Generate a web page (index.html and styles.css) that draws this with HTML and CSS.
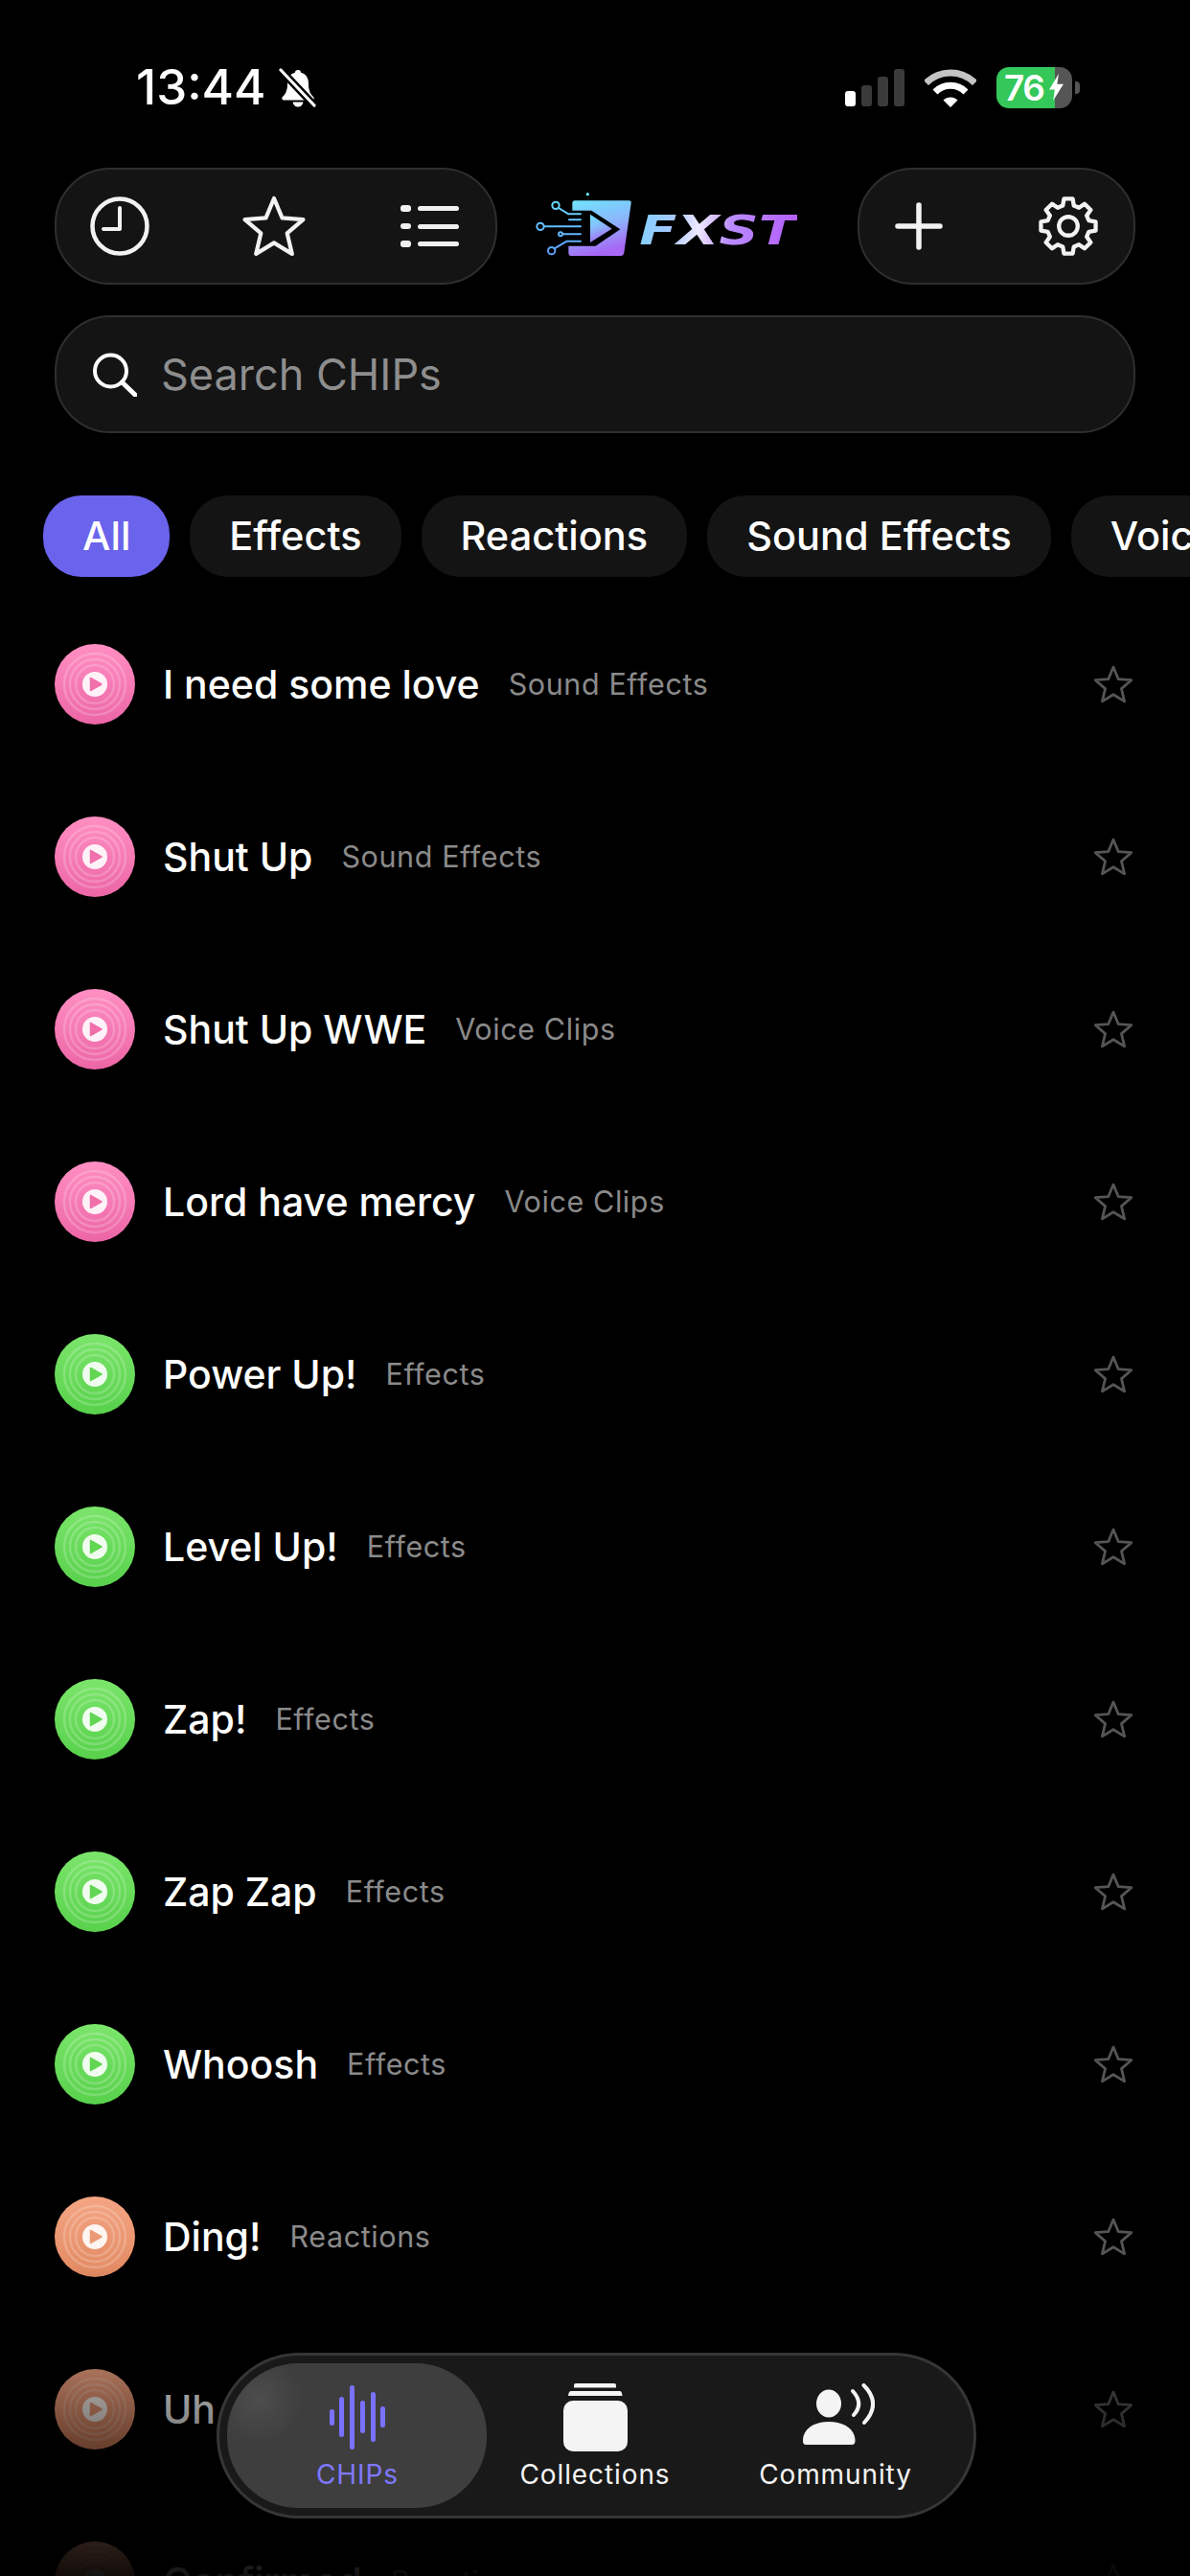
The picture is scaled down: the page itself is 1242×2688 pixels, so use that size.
FILE: index.html
```html
<!DOCTYPE html>
<html lang="en">
<head>
<meta charset="utf-8">
<title>FXST CHIPs</title>
<link rel="stylesheet" href="styles.css">
</head>
<body>
<svg class="defs" width="0" height="0" aria-hidden="true">
  <defs>
    <polygon id="star" points="0,-32 8.5,-11.6 30.4,-9.9 13.7,4.4 18.8,25.9 0,14.4 -18.8,25.9 -13.7,4.4 -30.4,-9.9 -8.5,-11.6"/>
    <g id="disc">
      <circle cx="42" cy="42" r="32" fill="none" stroke="#fff" stroke-opacity=".2" stroke-width="2.4"/>
      <circle cx="42" cy="42" r="26" fill="none" stroke="#fff" stroke-opacity=".2" stroke-width="2.4"/>
      <circle cx="42" cy="42" r="20" fill="none" stroke="#fff" stroke-opacity=".2" stroke-width="2.4"/>
      <circle cx="42" cy="42" r="13" fill="#fff" fill-opacity=".9"/>
      <path d="M37.5 35.5 L49 42 L37.5 48.5 Z" fill="currentColor" stroke="currentColor" stroke-width="1.5" stroke-linejoin="round"/>
    </g>
    <linearGradient id="tile" x1="0" y1="0" x2="0.3" y2="1">
      <stop offset="0" stop-color="#6fe6ff"/><stop offset=".55" stop-color="#8cb4fb"/><stop offset="1" stop-color="#a768f5"/>
    </linearGradient>
    <linearGradient id="word" gradientUnits="userSpaceOnUse" x1="382" y1="100" x2="872" y2="190">
      <stop offset="0" stop-color="#7fd0ff"/><stop offset=".22" stop-color="#a9c8ff"/><stop offset=".38" stop-color="#efe9ff"/><stop offset=".58" stop-color="#b98cff"/><stop offset="1" stop-color="#b45cf8"/>
    </linearGradient>
    <linearGradient id="wire" gradientUnits="userSpaceOnUse" x1="0" y1="30" x2="0" y2="225">
      <stop offset="0" stop-color="#6fe6ff"/><stop offset="1" stop-color="#5b9dfa"/>
    </linearGradient>
  </defs>
</svg>

<div class="screen">
  <header class="status">
    <div class="status-left">
      <span class="time">13:44</span>
      <svg class="bell" viewBox="0 0 39 41">
        <path fill="#fff" d="M20 2c-2 0-3 1.200-3.200 2.800C11.500 6.300 9 10.500 9 16c0 7-1.500 10.500-5 14-1.500 1.500-.5 3.500 1.500 3.500h29c2 0 3-2 1.500-3.500-3.500-3.500-5-7-5-14 0-5.500-2.500-9.700-7.800-11.200C23 3.200 22 2 20 2z"/>
        <path fill="#fff" d="M14.500 35.500h11c-.5 3-2.800 5-5.500 5s-5-2-5.500-5z"/>
        <line x1="2" y1="2" x2="37" y2="39" stroke="#000" stroke-width="8"/>
        <line x1="2" y1="2" x2="37" y2="39" stroke="#fff" stroke-width="3.200" stroke-linecap="round"/>
      </svg>
    </div>
    <div class="status-right">
      <div class="signal">
        <i class="bar bar-1"></i><i class="bar bar-2"></i><i class="bar bar-3"></i><i class="bar bar-4"></i>
      </div>
      <svg class="wifi" viewBox="0 0 54 41">
        <path d="M1.500 15.500a36 36 0 0 1 51 0" fill="none" stroke="#c4c4c4" stroke-width="7"/>
        <path d="M11 25a22.500 22.500 0 0 1 32 0" fill="none" stroke="#fff" stroke-width="7"/>
        <path d="M19.500 33.500a10.600 10.600 0 0 1 15 0L27 41z" fill="#fff"/>
      </svg>
      <div class="battery">
        <div class="battery-body">
          <span class="battery-level">76</span>
          <svg class="bolt" viewBox="0 0 18 34"><path d="M12 0L0 20h7L5 34 18 13h-8z" fill="#fff"/></svg>
        </div>
        <i class="battery-nub"></i>
      </div>
    </div>
  </header>

  <nav class="toolbar">
    <div class="pill pill-left">
      <svg class="ico-clock" viewBox="0 0 62 62" fill="none" stroke="#f2f2f2" stroke-linecap="round" stroke-linejoin="round">
        <circle cx="31" cy="31" r="28.500" stroke-width="4.500"/>
        <path d="M31 12V34H14" stroke-width="4"/>
      </svg>
      <svg class="ico-star" viewBox="-34 -35 68 64"><use href="#star"/></svg>
      <div class="ico-list">
        <div class="list-line"><i class="list-dot"></i><i class="list-bar"></i></div>
        <div class="list-line"><i class="list-dot"></i><i class="list-bar"></i></div>
        <div class="list-line"><i class="list-dot"></i><i class="list-bar"></i></div>
      </div>
    </div>

    <svg class="logo" viewBox="54 24 822 210">
      <g fill="none" stroke="url(#wire)" stroke-width="6" stroke-linecap="round" stroke-linejoin="round">
        <circle cx="120" cy="70" r="11"/>
        <path d="M129 78L160 97H198"/>
        <path d="M162 115H198"/>
        <circle cx="72" cy="136" r="11"/>
        <path d="M84 136H198"/>
        <circle cx="135" cy="160" r="6"/>
        <path d="M143 160H198"/>
        <circle cx="107" cy="212" r="11"/>
        <path d="M116 205L155 182H198"/>
      </g>
      <circle cx="220" cy="35" r="5" fill="#6fe6ff"/>
      <path fill="url(#tile)" fill-rule="evenodd" d="M180 55H350Q358 55 356 64L334 218Q332 228 322 228H170Q160 228 160 218V197H245L322 145L232 86H172V63Q172 55 180 55Z"/>
      <path fill="url(#tile)" d="M228 98L296 143L228 186Z"/>
      <text class="logo-word" x="382" y="192" textLength="490" lengthAdjust="spacingAndGlyphs" fill="url(#word)">FXST</text>
    </svg>

    <div class="pill pill-right">
      <svg class="ico-plus" viewBox="0 0 50 50"><path d="M25 3V47M3 25H47" fill="none" stroke="#f2f2f2" stroke-width="5.500" stroke-linecap="round"/></svg>
      <svg class="ico-gear" viewBox="-33 -33 66 66" fill="none" stroke="#f2f2f2" stroke-width="4.200" stroke-linejoin="round">
        <polygon points="20.800,-5.600 27.700,-4.400 27.700,4.400 20.800,5.600 18.600,10.750 22.650,16.460 16.460,22.650 10.750,18.600 5.600,20.800 4.400,27.700 -4.400,27.700 -5.600,20.800 -10.750,18.600 -16.460,22.650 -22.650,16.460 -18.600,10.750 -20.800,5.600 -27.700,4.400 -27.700,-4.400 -20.800,-5.600 -18.600,-10.750 -22.650,-16.460 -16.460,-22.650 -10.750,-18.600 -5.600,-20.800 -4.400,-27.700 4.400,-27.700 5.600,-20.800 10.750,-18.600 16.460,-22.650 22.650,-16.460 18.600,-10.750"/>
        <circle r="9.500"/>
      </svg>
    </div>
  </nav>

  <div class="search">
    <svg class="ico-search" viewBox="0 0 46 46" fill="none" stroke="#fff" stroke-linecap="round">
      <circle cx="18.500" cy="19" r="16.500" stroke-width="4"/>
      <path d="M30.500 31L44 44" stroke-width="5"/>
    </svg>
    <span class="search-text">Search CHIPs</span>
  </div>

  <div class="chips">
    <span class="chip chip-on">All</span>
    <span class="chip">Effects</span>
    <span class="chip">Reactions</span>
    <span class="chip">Sound Effects</span>
    <span class="chip">Voice Clips</span>
  </div>

  <main class="list">
    <div class="row"><div class="disc disc-pink"><svg viewBox="0 0 84 84"><use href="#disc"/></svg></div><span class="name">I need some love</span><span class="cat">Sound Effects</span><svg class="row-star" viewBox="-34 -35 68 64"><use href="#star"/></svg></div>
    <div class="row"><div class="disc disc-pink"><svg viewBox="0 0 84 84"><use href="#disc"/></svg></div><span class="name">Shut Up</span><span class="cat">Sound Effects</span><svg class="row-star" viewBox="-34 -35 68 64"><use href="#star"/></svg></div>
    <div class="row"><div class="disc disc-pink"><svg viewBox="0 0 84 84"><use href="#disc"/></svg></div><span class="name">Shut Up WWE</span><span class="cat">Voice Clips</span><svg class="row-star" viewBox="-34 -35 68 64"><use href="#star"/></svg></div>
    <div class="row"><div class="disc disc-pink"><svg viewBox="0 0 84 84"><use href="#disc"/></svg></div><span class="name">Lord have mercy</span><span class="cat">Voice Clips</span><svg class="row-star" viewBox="-34 -35 68 64"><use href="#star"/></svg></div>
    <div class="row"><div class="disc disc-green"><svg viewBox="0 0 84 84"><use href="#disc"/></svg></div><span class="name">Power Up!</span><span class="cat">Effects</span><svg class="row-star" viewBox="-34 -35 68 64"><use href="#star"/></svg></div>
    <div class="row"><div class="disc disc-green"><svg viewBox="0 0 84 84"><use href="#disc"/></svg></div><span class="name">Level Up!</span><span class="cat">Effects</span><svg class="row-star" viewBox="-34 -35 68 64"><use href="#star"/></svg></div>
    <div class="row"><div class="disc disc-green"><svg viewBox="0 0 84 84"><use href="#disc"/></svg></div><span class="name">Zap!</span><span class="cat">Effects</span><svg class="row-star" viewBox="-34 -35 68 64"><use href="#star"/></svg></div>
    <div class="row"><div class="disc disc-green"><svg viewBox="0 0 84 84"><use href="#disc"/></svg></div><span class="name">Zap Zap</span><span class="cat">Effects</span><svg class="row-star" viewBox="-34 -35 68 64"><use href="#star"/></svg></div>
    <div class="row"><div class="disc disc-green"><svg viewBox="0 0 84 84"><use href="#disc"/></svg></div><span class="name">Whoosh</span><span class="cat">Effects</span><svg class="row-star" viewBox="-34 -35 68 64"><use href="#star"/></svg></div>
    <div class="row"><div class="disc disc-peach"><svg viewBox="0 0 84 84"><use href="#disc"/></svg></div><span class="name">Ding!</span><span class="cat">Reactions</span><svg class="row-star" viewBox="-34 -35 68 64"><use href="#star"/></svg></div>
    <div class="row"><div class="disc disc-peach"><svg viewBox="0 0 84 84"><use href="#disc"/></svg></div><span class="name">Uh oh</span><span class="cat">Reactions</span><svg class="row-star" viewBox="-34 -35 68 64"><use href="#star"/></svg></div>
    <div class="row"><div class="disc disc-peach"><svg viewBox="0 0 84 84"><use href="#disc"/></svg></div><span class="name">Confirmed</span><span class="cat">Reactions</span><svg class="row-star" viewBox="-34 -35 68 64"><use href="#star"/></svg></div>
  </main>

  <div class="fade"></div>

  <nav class="tabbar">
    <div class="tab tab-on">
      <div class="waves"><i class="wave w1"></i><i class="wave w2"></i><i class="wave w3"></i><i class="wave w4"></i><i class="wave w5"></i><i class="wave w6"></i></div>
      <span class="tab-label">CHIPs</span>
    </div>
    <div class="tab tab-mid">
      <svg class="ico-stack" viewBox="0 0 68 72">
        <path fill="#f4f4f4" d="M14 0H54Q56 0 56 2V4.500H12V2Q12 0 14 0Z"/>
        <path fill="#f4f4f4" d="M9 8H60Q62 8 62.500 13H6Q6.500 8 9 8Z"/>
        <rect x="1" y="18" width="67" height="53" rx="10" fill="#f4f4f4"/>
      </svg>
      <span class="tab-label">Collections</span>
    </div>
    <div class="tab">
      <svg class="ico-voice" viewBox="0 0 76 72">
        <ellipse cx="28" cy="21" rx="13" ry="14.500" fill="#f4f4f4"/>
        <path fill="#f4f4f4" d="M1 60C1 47 13 40 28 40S55.500 47 55.500 60Q55.500 64 52 64H4Q1 64 1 60Z"/>
        <path d="M53 8Q65 21 54 33" fill="none" stroke="#f4f4f4" stroke-width="4" stroke-linecap="round"/>
        <path d="M64.500 2Q83.500 21 65 41" fill="none" stroke="#f4f4f4" stroke-width="4" stroke-linecap="round"/>
      </svg>
      <span class="tab-label">Community</span>
    </div>
  </nav>
</div>
</body>
</html>
```

FILE: styles.css
```css
* { box-sizing: border-box; }

html, body {
  margin: 0;
  padding: 0;
  background: #000;
}

body {
  font-family: Inter, "Noto Sans", "Liberation Sans", sans-serif;
  color: #fff;
}

.defs { position: absolute; }

.screen {
  position: relative;
  width: 1242px;
  height: 2688px;
  overflow: hidden;
  background: #000;
}

/* status bar */
.status {
  display: flex;
  align-items: center;
  justify-content: space-between;
  height: 50px;
  padding: 0 115px 0 142px;
}

.screen > .status { margin-top: 66px; }

.status-left {
  display: flex;
  align-items: center;
  gap: 13px;
}

.time {
  font-size: 51px;
  font-weight: 500;
  line-height: 50px;
}

.bell { width: 39px; height: 41px; }

.status-right {
  display: flex;
  align-items: center;
  gap: 21px;
}

.signal {
  display: flex;
  align-items: flex-end;
  gap: 6px;
  height: 39px;
}

.bar {
  display: block;
  width: 11px;
  border-radius: 3px;
  background: #3a3a3a;
}

.bar-1 { height: 16px; background: #fff; }
.bar-2 { height: 22px; }
.bar-3 { height: 31px; }
.bar-4 { height: 39px; }

.wifi { width: 54px; height: 41px; }

.battery {
  display: flex;
  align-items: center;
  gap: 3px;
}

.battery-body {
  display: flex;
  align-items: center;
  width: 79px;
  height: 43px;
  padding-left: 8px;
  border-radius: 13px;
  background: linear-gradient(90deg, #34c759 0 61px, #555 61px);
}

.battery-level {
  font-size: 37px;
  font-weight: 600;
  line-height: 43px;
  letter-spacing: -1.500px;
}

.bolt { width: 17px; height: 28px; margin-left: 5px; }

.battery-nub {
  display: block;
  width: 5px;
  height: 13px;
  border-radius: 0 4px 4px 0;
  background: #555;
}

/* toolbar */
.toolbar {
  display: flex;
  align-items: center;
  height: 122px;
  margin-top: 59px;
  padding: 0 57px;
}

.pill {
  display: flex;
  align-items: center;
  height: 122px;
  border: 2px solid #2e2e2e;
  border-radius: 58px;
  background: #141414;
}

.pill-left {
  width: 462px;
  padding: 0 38px 0 35px;
  justify-content: space-between;
}

.pill-right {
  width: 290px;
  margin-left: auto;
  padding: 0 34px 0 37px;
  justify-content: space-between;
}

.ico-clock { width: 62px; height: 62px; }

.ico-star {
  width: 68px;
  height: 64px;
  margin-left: -3px;
  fill: none;
  stroke: #f2f2f2;
  stroke-width: 4.200;
  stroke-linejoin: round;
}

.ico-list {
  display: flex;
  flex-direction: column;
  gap: 12.500px;
  width: 61px;
}

.list-line {
  display: flex;
  align-items: center;
  justify-content: space-between;
  height: 6px;
}

.list-dot {
  display: block;
  width: 11px;
  height: 6.500px;
  border-radius: 3px;
  background: #f0f0f0;
}

.list-bar {
  display: block;
  width: 43px;
  height: 5px;
  border-radius: 2.500px;
  background: #f0f0f0;
}

.logo {
  flex: none;
  width: 274px;
  height: 70px;
  margin-left: 39px;
  margin-top: -4px;
}

.logo-word {
  font-family: "DejaVu Sans", "Liberation Sans", sans-serif;
  font-size: 130px;
  font-weight: 700;
  font-style: italic;
}

.ico-plus { width: 50px; height: 50px; }
.ico-gear { width: 68px; height: 68px; }

/* search */
.search {
  display: flex;
  align-items: center;
  gap: 25px;
  height: 123px;
  margin: 32px 57px 0;
  padding-left: 38px;
  border: 2px solid #2e2e2e;
  border-radius: 58px;
  background: #141414;
}

.ico-search { width: 46px; height: 46px; }

.search-text {
  font-size: 45px;
  line-height: 56px;
  color: #8e8e8e;
}

/* filter chips */
.chips {
  display: flex;
  gap: 21px;
  margin-top: 65px;
  padding-left: 45px;
  overflow: hidden;
}

.chip {
  flex: none;
  height: 85px;
  padding: 0 41px;
  border-radius: 40px;
  background: #141414;
  font-size: 41.500px;
  font-weight: 500;
  line-height: 85px;
  white-space: nowrap;
}

.chip-on { background: #6a63ec; }

/* list */
.list { margin-top: 22px; }

.row {
  display: flex;
  align-items: center;
  height: 180px;
  padding: 0 59px 0 57px;
}

.disc {
  flex: none;
  width: 84px;
  height: 84px;
  border-radius: 50%;
  margin-right: 29px;
}

.disc svg { display: block; width: 84px; height: 84px; }

.disc-pink { color: #f070ab; background: linear-gradient(#ff8fc2, #ec66a6); }
.disc-green { color: #62d653; background: linear-gradient(#7be56b, #58d14c); }
.disc-peach { color: #ec9a76; background: linear-gradient(#f5a584, #e28a62); }

.name {
  font-size: 41px;
  font-weight: 500;
  line-height: 50px;
  white-space: nowrap;
}

.cat {
  margin-left: 30px;
  font-size: 30.500px;
  line-height: 40px;
  letter-spacing: .6px;
  color: #8a8a8a;
  white-space: nowrap;
}

.row-star {
  flex: none;
  width: 42px;
  height: 40px;
  margin-left: auto;
  fill: none;
  stroke: #555;
  stroke-width: 4.500;
  stroke-linejoin: round;
}

/* bottom fade over the list */
.fade {
  position: absolute;
  left: 0;
  right: 0;
  bottom: 0;
  height: 324px;
  background: linear-gradient(rgba(0,0,0,0), rgba(0,0,0,.92));
}

/* tab bar */
.tabbar {
  position: absolute;
  left: 226px;
  top: 2455px;
  display: flex;
  width: 793px;
  height: 173px;
  padding: 0 20px;
  border: 3px solid #363636;
  border-radius: 86px;
  background: #191919;
}

.tab {
  position: relative;
  display: flex;
  flex: 1;
  flex-direction: column;
  align-items: center;
  padding-top: 29px;
}

.tab-mid { padding-right: 3px; }

.tab-on::before {
  content: "";
  position: absolute;
  left: -12px;
  right: -11px;
  top: 8px;
  height: 151px;
  border-radius: 74px;
  background:
    radial-gradient(circle at 12% 25%, rgba(255,255,255,.08), rgba(255,255,255,0) 18%),
    #3e3e3e;
}

.waves, .ico-stack, .ico-voice, .tab-label { position: relative; }

.waves {
  display: flex;
  align-items: center;
  gap: 5.800px;
  height: 70px;
}

.wave {
  display: block;
  width: 5px;
  border-radius: 3px;
  background: #7a72ff;
}

.w1 { height: 17px; }
.w2 { height: 42px; }
.w3 { height: 67px; }
.w4 { height: 34px; }
.w5 { height: 52px; }
.w6 { height: 22px; }

.ico-stack { width: 68px; height: 72px; margin-bottom: -2px; }
.ico-voice { width: 76px; height: 72px; margin-bottom: -2px; margin-left: 5px; }

.tab-label {
  margin-top: 8px;
  font-size: 28px;
  font-weight: 400;
  line-height: 34px;
  letter-spacing: .9px;
  color: #f4f4f4;
  white-space: nowrap;
}

.tab-on .tab-label { color: #7f78ff; }
```
